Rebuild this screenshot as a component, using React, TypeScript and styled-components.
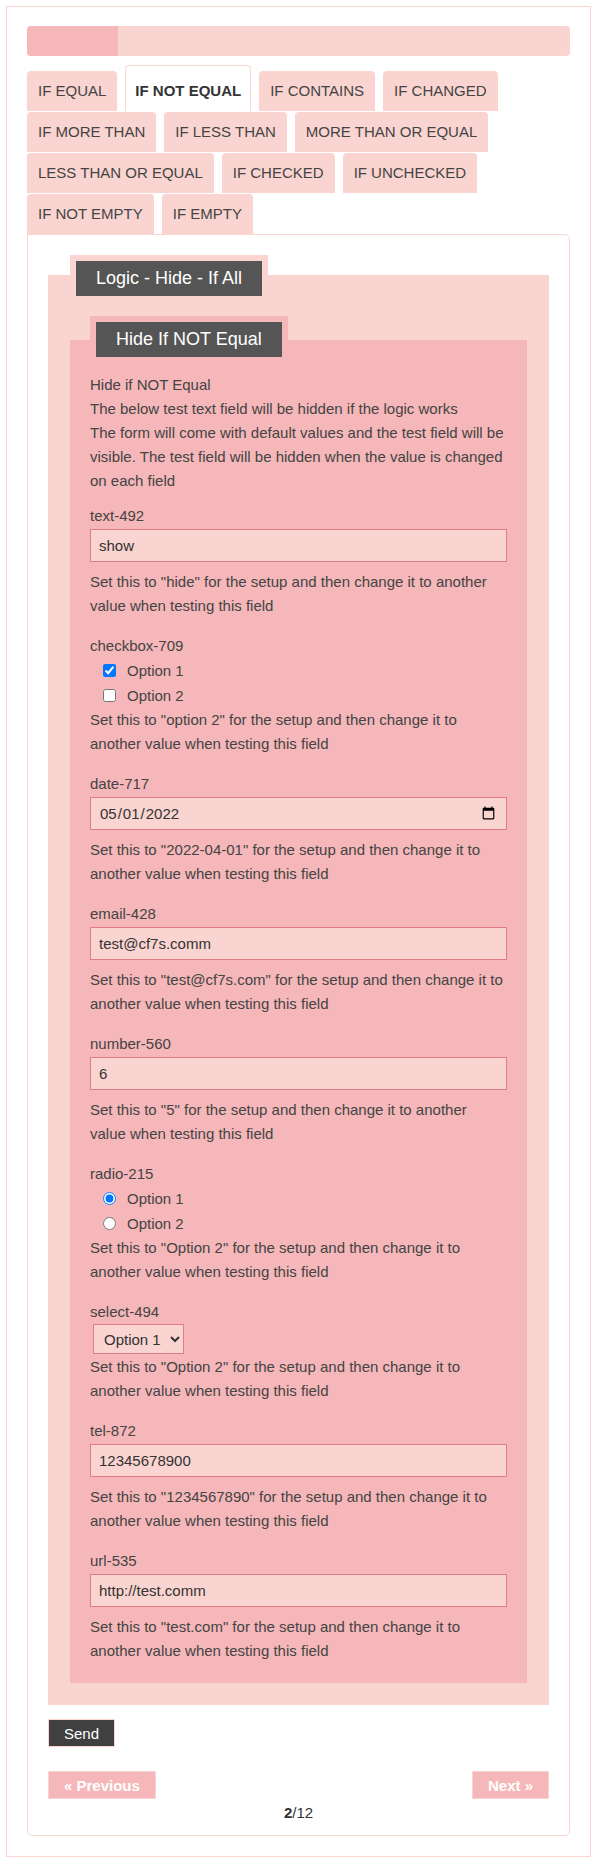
import React from 'react';
import styled, { createGlobalStyle } from 'styled-components';

const LIGHT = '#fad4d0';
const ROSE = '#f5b7b9';
const EDGE = '#e07c82';
const INK = '#444';

const GlobalStyle = createGlobalStyle`
  body {
    margin: 0;
    background: #fff;
    font-family: "Liberation Sans", Arial, sans-serif;
    font-size: 15px;
    color: ${INK};
  }
`;

const tabs = [
  'If Equal',
  'If Not Equal',
  'If Contains',
  'If Changed',
  'If More Than',
  'If Less Than',
  'More Than or Equal',
  'Less Than or Equal',
  'If Checked',
  'If Unchecked',
  'If Not Empty',
  'If Empty',
];

const step = 2;
const totalSteps = 12;

const Page = styled.div`
  margin: 6px;
  width: 585px;
  box-sizing: border-box;
  border: 1px solid ${LIGHT};
  padding: 19px 20px 20px;
`;

const Progress = styled.div`
  height: 30px;
  background: ${LIGHT};
  border-radius: 4px;
  overflow: hidden;
`;

const ProgressFill = styled.div`
  height: 100%;
  background: ${ROSE};
`;

const TabList = styled.ul`
  list-style: none;
  margin: 9px 0 0;
  padding: 0;
  display: flex;
  flex-wrap: wrap;
  align-items: flex-end;
  column-gap: 8px;
  row-gap: 1px;
`;

const Tab = styled.li<{ $active?: boolean }>`
  box-sizing: border-box;
  height: ${(p) => (p.$active ? 46 : 40)}px;
  padding: ${(p) => (p.$active ? '5px 9px 0' : '0 11px')};
  line-height: 40px;
  border-radius: 4px 4px 0 0;
  background: ${(p) => (p.$active ? '#fff' : LIGHT)};
  border: ${(p) => (p.$active ? `1px solid ${LIGHT}` : 'none')};
  border-bottom: none;
  font-weight: ${(p) => (p.$active ? 700 : 400)};
  color: ${(p) => (p.$active ? '#333' : INK)};
  text-transform: uppercase;
  white-space: nowrap;
  cursor: pointer;
`;

const Panel = styled.form`
  border: 1px solid ${LIGHT};
  border-radius: 0 5px 5px 5px;
  padding: 20px 20px 10px;
`;

const Group = styled.section<{ $bg: string; $top: number; $pad: number; $right?: number }>`
  display: flex;
  flex-direction: column;
  margin-top: ${(p) => p.$top}px;
  background: ${(p) => p.$bg};
  padding: 0 ${(p) => p.$right ?? p.$pad}px ${(p) => p.$pad}px ${(p) => p.$pad}px;
`;

const Legend = styled.h3<{ $ring: string; $lift: number }>`
  align-self: flex-start;
  margin: -${(p) => p.$lift}px 0 0;
  padding: 7px 20px;
  border: 6px solid ${(p) => p.$ring};
  background: #555;
  color: #fff;
  font-size: 18px;
  font-weight: 400;
  line-height: 21px;
`;

const Intro = styled.p`
  margin: 10px 0 11px;
  line-height: 24px;
`;

const Field = styled.div`
  display: flex;
  flex-direction: column;
  margin-bottom: 16px;

  &:last-child {
    margin-bottom: 0;
  }
`;

const FieldLabel = styled.label`
  line-height: 24px;
`;

const TextInput = styled.input`
  box-sizing: border-box;
  width: calc(100% + 1px);
  height: 33px;
  margin: 1px 0 0;
  padding: 0 8px;
  border: 1px solid ${EDGE};
  border-radius: 0;
  background: ${LIGHT};
  font-family: inherit;
  font-size: 15px;
  color: #333;
  outline: none;
`;

const Picker = styled.select`
  align-self: flex-start;
  box-sizing: border-box;
  height: 30px;
  margin: 0 0 0 3px;
  padding: 0 6px;
  border: 1px solid ${EDGE};
  border-radius: 0;
  background: ${LIGHT};
  font-family: inherit;
  font-size: 15px;
  color: #333;
  outline: none;
`;

const Choice = styled.label`
  display: flex;
  align-items: center;
  height: 25px;
  padding-left: 13px;

  input {
    width: 13px;
    height: 13px;
    margin: 0 11px 0 0;
  }
`;

const Hint = styled.p<{ $gap: number }>`
  margin: ${(p) => p.$gap}px 0 0;
  line-height: 24px;
`;

const SendButton = styled.button`
  align-self: flex-start;
  display: block;
  height: 28px;
  margin-top: 14px;
  padding: 0 15px;
  border: 1px solid ${LIGHT};
  background: #404040;
  color: #fff;
  font-family: inherit;
  font-size: 15px;
  cursor: pointer;
`;

const Pager = styled.div`
  display: flex;
  justify-content: space-between;
  margin-top: 24px;
`;

const PageButton = styled.button`
  height: 28px;
  padding: 0 15px;
  border: 1px solid ${LIGHT};
  background: ${ROSE};
  color: #fff;
  font-family: inherit;
  font-size: 15px;
  font-weight: 700;
  cursor: pointer;
`;

const PageCount = styled.div`
  margin-top: 2px;
  text-align: center;
  line-height: 24px;
  color: #333;

  b {
    font-weight: 700;
  }
`;

type Kind = 'text' | 'date' | 'email' | 'number' | 'tel' | 'url' | 'checkbox' | 'radio' | 'select';

type FieldDef = {
  name: string;
  kind: Kind;
  value?: string;
  hint: string;
};

const fields: FieldDef[] = [
  { name: 'text-492', kind: 'text', value: 'show', hint: '"hide"' },
  { name: 'checkbox-709', kind: 'checkbox', hint: '"option 2"' },
  { name: 'date-717', kind: 'date', value: '2022-05-01', hint: '"2022-04-01"' },
  { name: 'email-428', kind: 'email', value: 'test@cf7s.comm', hint: '"test@cf7s.com"' },
  { name: 'number-560', kind: 'number', value: '6', hint: '"5"' },
  { name: 'radio-215', kind: 'radio', hint: '"Option 2"' },
  { name: 'select-494', kind: 'select', hint: '"Option 2"' },
  { name: 'tel-872', kind: 'tel', value: '12345678900', hint: '"1234567890"' },
  { name: 'url-535', kind: 'url', value: 'http://test.comm', hint: '"test.com"' },
];

const FormField = ({ def }: { def: FieldDef }) => {
  const hint = `Set this to ${def.hint} for the setup and then change it to another value when testing this field`;

  if (def.kind === 'checkbox' || def.kind === 'radio') {
    return (
      <Field>
        <FieldLabel>{def.name}</FieldLabel>
        <Choice>
          <input type={def.kind} name={def.name} defaultChecked />
          Option 1
        </Choice>
        <Choice>
          <input type={def.kind} name={def.name} />
          Option 2
        </Choice>
        <Hint $gap={0}>{hint}</Hint>
      </Field>
    );
  }

  if (def.kind === 'select') {
    return (
      <Field>
        <FieldLabel htmlFor={def.name}>{def.name}</FieldLabel>
        <Picker id={def.name} defaultValue="Option 1">
          <option>Option 1</option>
          <option>Option 2</option>
        </Picker>
        <Hint $gap={1}>{hint}</Hint>
      </Field>
    );
  }

  return (
    <Field>
      <FieldLabel htmlFor={def.name}>{def.name}</FieldLabel>
      <TextInput id={def.name} type={def.kind} defaultValue={def.value} />
      <Hint $gap={8}>{hint}</Hint>
    </Field>
  );
};

export default function App() {
  return (
    <>
      <GlobalStyle />
      <Page>
        <Progress>
          <ProgressFill style={{ width: `${(step / totalSteps) * 100}%` }} />
        </Progress>
        <TabList>
          {tabs.map((t, i) => (
            <Tab key={t} $active={i === step - 1}>
              {t}
            </Tab>
          ))}
        </TabList>
        <Panel onSubmit={(e) => e.preventDefault()}>
          <Group $bg={LIGHT} $top={20} $pad={22}>
            <Legend $ring={LIGHT} $lift={20}>Logic - Hide - If All</Legend>
            <Group $bg={ROSE} $top={38} $pad={20} $right={21}>
              <Legend $ring={ROSE} $lift={24}>Hide If NOT Equal</Legend>
              <Intro>
                Hide if NOT Equal
                <br />
                The below test text field will be hidden if the logic works
                <br />
                The form will come with default values and the test field will be visible. The test field will be hidden when the value is changed on each field
              </Intro>
              {fields.map((f) => (
                <FormField key={f.name} def={f} />
              ))}
            </Group>
          </Group>
          <SendButton type="submit">Send</SendButton>
          <Pager>
            <PageButton type="button">« Previous</PageButton>
            <PageButton type="button">Next »</PageButton>
          </Pager>
          <PageCount>
            <b>{step}</b>/{totalSteps}
          </PageCount>
        </Panel>
      </Page>
    </>
  );
}
